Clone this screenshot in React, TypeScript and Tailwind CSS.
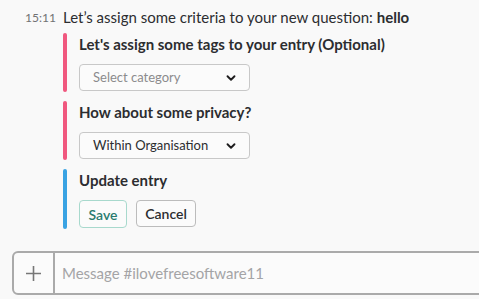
import { ChevronDown } from 'lucide-react'

function Attachment({ color, children }: { color: string; children: React.ReactNode }) {
  return (
    <div className="flex">
      <div className={`w-[4px] rounded-full ${color}`} />
      <div className="pl-[12px] pt-[1px] pb-[1px] flex flex-col">{children}</div>
    </div>
  )
}

function Select({ label, muted }: { label: string; muted?: boolean }) {
  return (
    <div className="mt-[10px] w-[171px] h-[27px] border border-[#c8c8c8] rounded-[4px] bg-[#fbfbfb] flex items-center justify-between pl-[13px] pr-[11px]">
      <span className={`text-[13px] ${muted ? 'text-[#8b8b8d]' : 'text-[#2c2d30]'}`}>{label}</span>
      <ChevronDown className="w-[14px] h-[14px] text-[#1d1c1d]" strokeWidth={3.2} />
    </div>
  )
}

export default function App() {
  return (
    <div
      className="w-[479px] h-[299px] bg-[#f9f9f9] overflow-hidden flex flex-col"
      style={{ fontFamily: 'Lato, "Noto Sans", sans-serif' }}
    >
      <div className="flex pt-[7px]">
        <div className="w-[63px] pl-[25px] pt-[3px] text-[12px] leading-[16px] text-[#717274]">15:11</div>
        <div className="flex flex-col gap-[9px]">
          <div className="text-[15px] leading-[20px] text-[#2c2d30]">
            Let’s assign some criteria to your new question: <b className="font-bold">hello</b>
          </div>

          <div className="flex flex-col gap-[9px] -mt-[3px]">
            <Attachment color="bg-[#f0587f]">
              <div className="text-[15px] leading-[20px] font-bold text-[#2c2d30]">
                Let's assign some tags to your entry (Optional)
              </div>
              <Select label="Select category" muted />
            </Attachment>

            <Attachment color="bg-[#f0587f]">
              <div className="text-[15px] leading-[20px] font-bold text-[#2c2d30]">How about some privacy?</div>
              <Select label="Within Organisation" />
            </Attachment>

            <Attachment color="bg-[#3aa3e3]">
              <div className="text-[15px] leading-[20px] font-bold text-[#2c2d30]">Update entry</div>
              <div className="mt-[10px] flex gap-[9px]">
                <button className="w-[48px] h-[28px] border border-[#a8d9cd] rounded-[4px] bg-[#fbfbfb] text-[14px] font-semibold text-[#2a7b6f]">
                  Save
                </button>
                <button className="w-[60px] h-[27px] border border-[#bcbcbc] rounded-[4px] bg-[#fbfbfb] text-[14px] font-semibold text-[#2c2d30]">
                  Cancel
                </button>
              </div>
            </Attachment>
          </div>
        </div>
      </div>

      <div className="mt-auto mb-[4px] ml-[12px] -mr-[6px] h-[44px] border-2 border-[#aaaaaa] rounded-[6px] bg-[#fbfbfb] flex">
        <div className="w-[41px] border-r-2 border-[#aaaaaa] flex items-center justify-center">
          <svg width="17" height="17" viewBox="0 0 17 17">
            <path d="M8.5 1v15M1 8.5h15" stroke="#777" strokeWidth="1.6" />
          </svg>
        </div>
        <div className="flex items-center pl-[7px] text-[15px] text-[#a4a4a6]">Message #ilovefreesoftware11</div>
      </div>
    </div>
  )
}
